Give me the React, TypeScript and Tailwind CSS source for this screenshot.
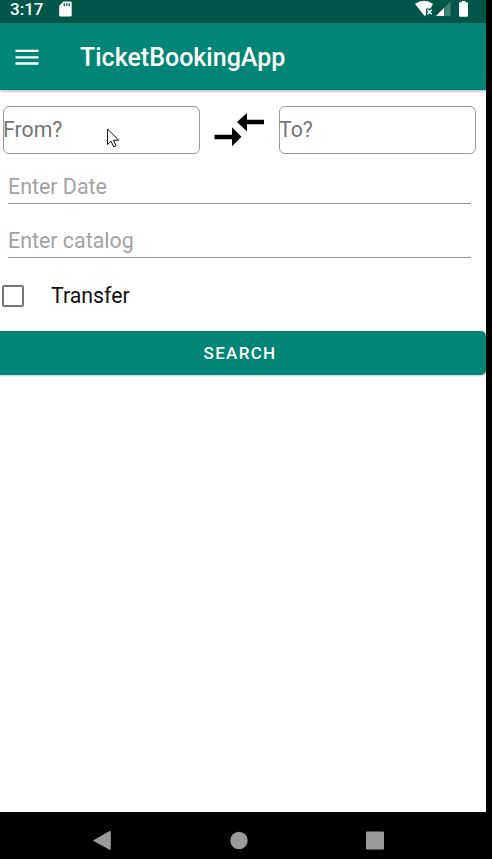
function StatusBar() {
  return (
    <div className="flex h-[23px] shrink-0 items-start bg-[#005749] text-white">
      <span className="ml-[10px] w-[49px] text-[17px] leading-[19px] font-medium">3:17</span>
      <svg width="13" height="16" viewBox="0 0 13 16" className="mt-[1px]">
        <path d="M4.5 0.5H11.5Q12.7 0.5 12.7 1.8V14.3Q12.7 15.6 11.5 15.6H1.4Q0.2 15.6 0.2 14.3V4.8Z" fill="#fff" />
        <path d="M5.3 2.2V5M7.8 2.2V5M10.3 2.2V5" stroke="#005749" strokeWidth="1.3" />
      </svg>
      <svg width="54" height="18" viewBox="0 0 54 18" className="ml-auto mr-[17px]">
        <path d="M0 4Q9-2.5 18 4L15.5 8.5H11V15L9.7 16Z" fill="#fff" />
        <path d="M12.3 9.7L16.7 14.3M16.7 9.7L12.3 14.3" stroke="#fff" strokeWidth="1.5" />
        <path d="M35.5 1.5V16H21Z" fill="#408175" />
        <path d="M29 8V16H21Z" fill="#fff" />
        <path d="M46.5 1H50.5V2.3H52Q53 2.3 53 3.3V15.5Q53 16.7 52 16.7H45Q44 16.7 44 15.5V3.3Q44 2.3 45 2.3H46.5Z" fill="#fff" />
      </svg>
    </div>
  );
}

function PlaceField({ label }: { label: string }) {
  return (
    <div className="flex h-[48px] w-[197px] items-center rounded-[6px] border border-[#999] text-[21.3px] leading-none text-[#757575]">
      <span className="-ml-px">{label}</span>
    </div>
  );
}

function LineField({ label }: { label: string }) {
  return (
    <div className="mr-[15px] ml-[8px] h-[54px] border-b-[1.5px] border-[#929292] pt-[22px] text-[21.4px] leading-[30px] text-[#a2a2a2]">
      {label}
    </div>
  );
}

export default function App() {
  return (
    <div className="relative flex h-[859px] w-[492px] flex-col overflow-hidden bg-black font-['Roboto',sans-serif]">
      <div className="flex w-[486px] flex-1 flex-col bg-white">
        <StatusBar />
        <header className="flex h-[67px] shrink-0 items-center bg-[#008577] text-white shadow-[0_1px_3px_rgba(0,0,0,0.35)]">
          <svg width="65" height="16" viewBox="0 0 65 16" className="ml-[15px]">
            <path d="M0.500 1.800H23.500M0.500 8.300H23.500M0.500 14.500H23.500" stroke="#fff" strokeWidth="2.300" />
          </svg>
          <h1 className="pt-[2px] text-[25px] font-medium">TicketBookingApp</h1>
        </header>
        <div className="mt-[16px] flex pl-[3px]">
          <PlaceField label="From?" />
          <svg width="79" height="48" viewBox="0 0 79 48">
            <path d="M14.500 28.800H32V21.300L41.500 30.700L32 40.200V33.300H14.500ZM64 13.700H47V7L37 16L47 25.500V18.200H64Z" fill="#000" />
          </svg>
          <PlaceField label="To?" />
        </div>
        <div className="-mt-[4px]">
          <LineField label="Enter Date" />
          <LineField label="Enter catalog" />
        </div>
        <div className="mt-[22px] flex h-[32px] items-center pl-[2px] text-[21.3px] text-[#111]">
          <span className="mr-[27px] h-[22px] w-[22px] rounded-[2px] border-2 border-[#767676]" />
          <span className="-mt-px">Transfer</span>
        </div>
        <button className="mt-[19px] h-[44px] w-full rounded-[5px] rounded-l-none bg-[#008577] pt-[2px] pr-[6px] text-[17px] font-medium tracking-[1.3px] text-white shadow-[0_1px_2px_rgba(0,0,0,0.2)]">
          SEARCH
        </button>
      </div>
      <nav className="flex h-[47px] shrink-0 items-center pt-[10px] pl-[92px]">
        <svg width="292" height="24" viewBox="0 0 292 24">
          <path d="M1.500 11.200L17.500 2Q18.800 1.500 18.800 3V20Q18.800 21.500 17.500 20.700L1.500 12Q0.800 11.600 1.500 11.200Z" fill="#999b99" />
          <circle cx="147" cy="11.500" r="8.700" fill="#999b99" />
          <rect x="274" y="2.500" width="18" height="18" rx="1" fill="#999b99" />
        </svg>
      </nav>
      <svg width="13" height="20" viewBox="0 0 13 20" className="absolute top-[128px] left-[107px]">
        <path d="M0.500 1V16.500L4 13.200L6.700 18.800L9 17.800L6.500 12.200H11.700Z" fill="#fff" stroke="#111" strokeWidth="1" />
      </svg>
    </div>
  );
}
